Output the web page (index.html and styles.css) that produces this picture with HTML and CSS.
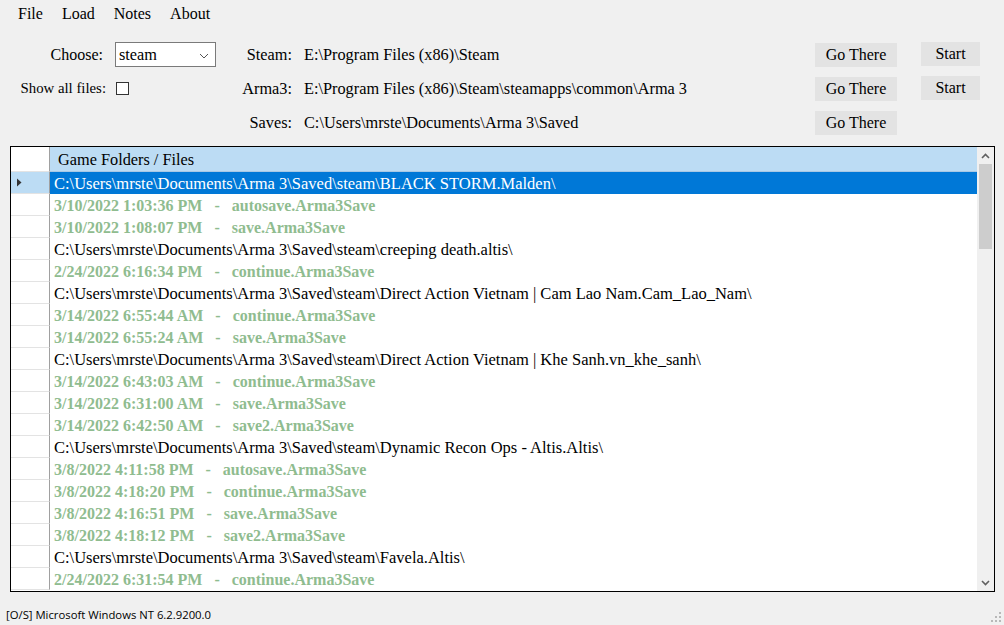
FILE: index.html
```html
<!DOCTYPE html>
<html>
<head>
<meta charset="utf-8">
<link rel="stylesheet" href="styles.css">
</head>
<body>
<div class="window">
  <div class="menubar">
    <span class="menu-item">File</span>
    <span class="menu-item">Load</span>
    <span class="menu-item">Notes</span>
    <span class="menu-item">About</span>
  </div>
  <div class="panel">
    <div class="lbl1 lbl-choose">Choose:</div>
    <div class="ctl"><div class="select"><span>steam</span><svg class="chev" width="10" height="6" viewBox="0 0 10 6"><path d="M1 1 L5 5 L9 1" fill="none" stroke="#555" stroke-width="1"/></svg></div></div>
    <div class="lbl2">Steam:</div>
    <div class="val">E:\Program Files (x86)\Steam</div>
    <div class="b1"><div class="btn go">Go There</div></div>
    <div class="sp"></div>
    <div class="b2"><div class="btn start">Start</div></div>

    <div class="lbl1 lbl-show">Show all files:</div>
    <div class="ctl"><div class="check"></div></div>
    <div class="lbl2">Arma3:</div>
    <div class="val">E:\Program Files (x86)\Steam\steamapps\common\Arma 3</div>
    <div class="b1"><div class="btn go">Go There</div></div>
    <div class="sp"></div>
    <div class="b2"><div class="btn start">Start</div></div>

    <div class="lbl1"></div>
    <div class="ctl"></div>
    <div class="lbl2">Saves:</div>
    <div class="val">C:\Users\mrste\Documents\Arma 3\Saved</div>
    <div class="b1"><div class="btn go">Go There</div></div>
    <div class="sp"></div>
    <div class="b2"></div>
  </div>
  <div class="gridwrap">
    <div class="grid">
      <div class="gridmain">
        <div class="hdr-row">
          <div class="rh rh-top"></div>
          <div class="hdr-cell">Game Folders / Files</div>
        </div>
        <div class="row sel"><div class="rh rh-sel"><svg width="6" height="9" viewBox="0 0 6 9"><path d="M1 0.5 L5.5 4.5 L1 8.5 Z" fill="#333"/></svg></div><div class="cell">C:\Users\mrste\Documents\Arma 3\Saved\steam\BLACK STORM.Malden\</div></div>
        <div class="row"><div class="rh"></div><div class="cell file">3/10/2022 1:03:36 PM   -   autosave.Arma3Save</div></div>
        <div class="row"><div class="rh"></div><div class="cell file">3/10/2022 1:08:07 PM   -   save.Arma3Save</div></div>
        <div class="row"><div class="rh"></div><div class="cell">C:\Users\mrste\Documents\Arma 3\Saved\steam\creeping death.altis\</div></div>
        <div class="row"><div class="rh"></div><div class="cell file">2/24/2022 6:16:34 PM   -   continue.Arma3Save</div></div>
        <div class="row"><div class="rh"></div><div class="cell">C:\Users\mrste\Documents\Arma 3\Saved\steam\Direct Action Vietnam | Cam Lao Nam.Cam_Lao_Nam\</div></div>
        <div class="row"><div class="rh"></div><div class="cell file">3/14/2022 6:55:44 AM   -   continue.Arma3Save</div></div>
        <div class="row"><div class="rh"></div><div class="cell file">3/14/2022 6:55:24 AM   -   save.Arma3Save</div></div>
        <div class="row"><div class="rh"></div><div class="cell">C:\Users\mrste\Documents\Arma 3\Saved\steam\Direct Action Vietnam | Khe Sanh.vn_khe_sanh\</div></div>
        <div class="row"><div class="rh"></div><div class="cell file">3/14/2022 6:43:03 AM   -   continue.Arma3Save</div></div>
        <div class="row"><div class="rh"></div><div class="cell file">3/14/2022 6:31:00 AM   -   save.Arma3Save</div></div>
        <div class="row"><div class="rh"></div><div class="cell file">3/14/2022 6:42:50 AM   -   save2.Arma3Save</div></div>
        <div class="row"><div class="rh"></div><div class="cell">C:\Users\mrste\Documents\Arma 3\Saved\steam\Dynamic Recon Ops - Altis.Altis\</div></div>
        <div class="row"><div class="rh"></div><div class="cell file">3/8/2022 4:11:58 PM   -   autosave.Arma3Save</div></div>
        <div class="row"><div class="rh"></div><div class="cell file">3/8/2022 4:18:20 PM   -   continue.Arma3Save</div></div>
        <div class="row"><div class="rh"></div><div class="cell file">3/8/2022 4:16:51 PM   -   save.Arma3Save</div></div>
        <div class="row"><div class="rh"></div><div class="cell file">3/8/2022 4:18:12 PM   -   save2.Arma3Save</div></div>
        <div class="row"><div class="rh"></div><div class="cell">C:\Users\mrste\Documents\Arma 3\Saved\steam\Favela.Altis\</div></div>
        <div class="row"><div class="rh"></div><div class="cell file">2/24/2022 6:31:54 PM   -   continue.Arma3Save</div></div>
      </div>
      <div class="scrollbar">
        <div class="arrow"><svg width="9" height="6" viewBox="0 0 9 6"><path d="M1 5 L4.5 1.5 L8 5" fill="none" stroke="#606060" stroke-width="1.6"/></svg></div>
        <div class="track"><div class="thumb"></div></div>
        <div class="arrow"><svg width="9" height="6" viewBox="0 0 9 6"><path d="M1 1 L4.5 4.5 L8 1" fill="none" stroke="#606060" stroke-width="1.6"/></svg></div>
      </div>
    </div>
  </div>
  <div class="statusbar">
    <span class="status-text">[O/S] Microsoft Windows NT 6.2.9200.0</span>
    <svg class="grip" width="12" height="12" viewBox="0 0 12 12">
      <rect x="9" y="1" width="2" height="2" fill="#b8b8b8"/>
      <rect x="5" y="5" width="2" height="2" fill="#b8b8b8"/>
      <rect x="9" y="5" width="2" height="2" fill="#b8b8b8"/>
      <rect x="1" y="9" width="2" height="2" fill="#b8b8b8"/>
      <rect x="5" y="9" width="2" height="2" fill="#b8b8b8"/>
      <rect x="9" y="9" width="2" height="2" fill="#b8b8b8"/>
    </svg>
  </div>
</div>
</body>
</html>
```
FILE: styles.css
```css
html, body {
  margin: 0;
  padding: 0;
}
body {
  background: #f0f0f0;
  font-family: "Liberation Serif", "DejaVu Serif", serif;
  font-size: 16.3px;
  color: #000;
}
.window {
  width: 1004px;
  height: 625px;
  display: flex;
  flex-direction: column;
  overflow: hidden;
}
.menubar {
  height: 28px;
  background: #f0f0f0;
  display: flex;
  align-items: center;
  padding-left: 11px;
  box-sizing: border-box;
}
.menu-item {
  padding: 0 7px;
  margin-right: 5px;
  font-size: 16px;
}
.panel {
  display: grid;
  grid-template-columns: 115px 101px 76px 523px 82px 24px 59px;
  grid-template-rows: 34px 34px 34px;
  box-sizing: border-box;
  padding-top: 10px;
  height: 119px;
}
.lbl1, .lbl2 {
  display: flex;
  align-items: center;
  justify-content: flex-end;
  padding-right: 10px;
  font-size: 16.3px;
}
.lbl-choose {
  padding-right: 12px;
  font-size: 16px;
}
.lbl-show {
  padding-right: 9px;
  font-size: 14.8px;
}
.lbl2 {
  padding-right: 0;
}
.val {
  display: flex;
  align-items: center;
  padding-left: 12px;
  font-size: 16.3px;
}
.ctl, .b1, .b2 {
  display: flex;
  align-items: center;
}
.select {
  width: 101px;
  height: 25px;
  box-sizing: border-box;
  border: 1px solid #7a7a7a;
  background: #fff;
  display: flex;
  align-items: center;
  justify-content: space-between;
  padding: 0 6px 0 3px;
  font-size: 16.3px;
}
.chev {
  margin-top: 2px;
}
.check {
  width: 13px;
  height: 13px;
  box-sizing: border-box;
  border: 1px solid #333;
  background: #fff;
  margin-left: 1px;
}
.btn {
  height: 24px;
  background: #e3e3e3;
  display: flex;
  align-items: center;
  justify-content: center;
  font-size: 16px;
}
.go {
  width: 82px;
}
.start {
  width: 59px;
  margin-top: -1px;
}
.gridwrap {
  padding: 0 9px 0 10px;
  height: 446px;
}
.grid {
  height: 446px;
  box-sizing: border-box;
  border: 1px solid #000;
  background: #fff;
  display: flex;
  overflow: hidden;
}
.gridmain {
  flex: 1;
  display: flex;
  flex-direction: column;
  overflow: hidden;
}
.hdr-row {
  height: 25px;
  flex: none;
  display: flex;
}
.rh {
  width: 39px;
  flex: none;
  box-sizing: border-box;
  border-right: 1px solid #a0a0a0;
  border-bottom: 1px solid #e3e3e3;
  background: #fff;
  display: flex;
  align-items: center;
  padding-left: 5px;
}
.rh-sel {
  background: #bcdcf4;
}
.hdr-cell {
  flex: 1;
  background: #bcdcf4;
  display: flex;
  align-items: center;
  padding: 2px 0 0 8px;
  font-size: 16.3px;
  box-sizing: border-box;
  border-bottom: 1px solid #a8c8e4;
}
.row {
  height: 22px;
  flex: none;
  display: flex;
}
.cell {
  flex: 1;
  display: flex;
  align-items: center;
  padding: 2px 0 0 4px;
  white-space: pre;
  font-size: 16.5px;
}
.sel .cell {
  background: #0078d7;
  color: #fff;
}
.cell.file {
  color: #8fbc8f;
  font-weight: bold;
  font-size: 16px;
}
.scrollbar {
  width: 17px;
  flex: none;
  background: #f0f0f0;
  display: flex;
  flex-direction: column;
}
.arrow {
  height: 17px;
  display: flex;
  align-items: center;
  justify-content: center;
  flex: none;
}
.track {
  flex: 1;
  padding: 0 2px;
}
.thumb {
  height: 85px;
  background: #cdcdcd;
}
.statusbar {
  margin-top: 10px;
  height: 23px;
  background: #f0f0f0;
  display: flex;
  align-items: center;
  justify-content: space-between;
  padding: 2px 2px 0 6px;
  box-sizing: border-box;
  font-family: "Open Sans", "Noto Sans", sans-serif;
  font-size: 11.3px;
  color: #000;
}
.grip {
  align-self: flex-end;
  margin-bottom: 2px;
}
```
